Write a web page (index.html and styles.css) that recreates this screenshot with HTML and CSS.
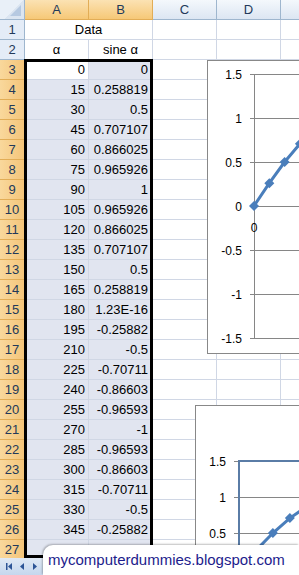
FILE: index.html
```html
<!DOCTYPE html>
<html lang="en">
<head>
    <meta charset="UTF-8">
    <title>Sine table</title>
    <link rel="stylesheet" href="styles.css">
</head>
<body>
<div class="sheet">
    <div class="row head">
        <div class="corner"></div>
        <div class="hd on">A</div>
        <div class="hd on">B</div>
        <div class="hd">C</div>
        <div class="hd">D</div>
        <div class="hd"></div>
    </div>
    <div class="row"><div class="rh">1</div><div class="merge">Data</div><div class="c"></div><div class="c"></div><div class="c"></div></div>
    <div class="row"><div class="rh">2</div><div class="c mid">α</div><div class="c mid">sine α</div><div class="c"></div><div class="c"></div><div class="c"></div></div>
    <div class="row"><div class="rh on">3</div><div class="c num">0</div><div class="c num sel">0</div><div class="c"></div><div class="c"></div><div class="c"></div></div>
    <div class="row"><div class="rh on">4</div><div class="c num sel">15</div><div class="c num sel">0.258819</div><div class="c"></div><div class="c"></div><div class="c"></div></div>
    <div class="row"><div class="rh on">5</div><div class="c num sel">30</div><div class="c num sel">0.5</div><div class="c"></div><div class="c"></div><div class="c"></div></div>
    <div class="row"><div class="rh on">6</div><div class="c num sel">45</div><div class="c num sel">0.707107</div><div class="c"></div><div class="c"></div><div class="c"></div></div>
    <div class="row"><div class="rh on">7</div><div class="c num sel">60</div><div class="c num sel">0.866025</div><div class="c"></div><div class="c"></div><div class="c"></div></div>
    <div class="row"><div class="rh on">8</div><div class="c num sel">75</div><div class="c num sel">0.965926</div><div class="c"></div><div class="c"></div><div class="c"></div></div>
    <div class="row"><div class="rh on">9</div><div class="c num sel">90</div><div class="c num sel">1</div><div class="c"></div><div class="c"></div><div class="c"></div></div>
    <div class="row"><div class="rh on">10</div><div class="c num sel">105</div><div class="c num sel">0.965926</div><div class="c"></div><div class="c"></div><div class="c"></div></div>
    <div class="row"><div class="rh on">11</div><div class="c num sel">120</div><div class="c num sel">0.866025</div><div class="c"></div><div class="c"></div><div class="c"></div></div>
    <div class="row"><div class="rh on">12</div><div class="c num sel">135</div><div class="c num sel">0.707107</div><div class="c"></div><div class="c"></div><div class="c"></div></div>
    <div class="row"><div class="rh on">13</div><div class="c num sel">150</div><div class="c num sel">0.5</div><div class="c"></div><div class="c"></div><div class="c"></div></div>
    <div class="row"><div class="rh on">14</div><div class="c num sel">165</div><div class="c num sel">0.258819</div><div class="c"></div><div class="c"></div><div class="c"></div></div>
    <div class="row"><div class="rh on">15</div><div class="c num sel">180</div><div class="c num sel">1.23E-16</div><div class="c"></div><div class="c"></div><div class="c"></div></div>
    <div class="row"><div class="rh on">16</div><div class="c num sel">195</div><div class="c num sel">-0.25882</div><div class="c"></div><div class="c"></div><div class="c"></div></div>
    <div class="row"><div class="rh on">17</div><div class="c num sel">210</div><div class="c num sel">-0.5</div><div class="c"></div><div class="c"></div><div class="c"></div></div>
    <div class="row"><div class="rh on">18</div><div class="c num sel">225</div><div class="c num sel">-0.70711</div><div class="c"></div><div class="c"></div><div class="c"></div></div>
    <div class="row"><div class="rh on">19</div><div class="c num sel">240</div><div class="c num sel">-0.86603</div><div class="c"></div><div class="c"></div><div class="c"></div></div>
    <div class="row"><div class="rh on">20</div><div class="c num sel">255</div><div class="c num sel">-0.96593</div><div class="c"></div><div class="c"></div><div class="c"></div></div>
    <div class="row"><div class="rh on">21</div><div class="c num sel">270</div><div class="c num sel">-1</div><div class="c"></div><div class="c"></div><div class="c"></div></div>
    <div class="row"><div class="rh on">22</div><div class="c num sel">285</div><div class="c num sel">-0.96593</div><div class="c"></div><div class="c"></div><div class="c"></div></div>
    <div class="row"><div class="rh on">23</div><div class="c num sel">300</div><div class="c num sel">-0.86603</div><div class="c"></div><div class="c"></div><div class="c"></div></div>
    <div class="row"><div class="rh on">24</div><div class="c num sel">315</div><div class="c num sel">-0.70711</div><div class="c"></div><div class="c"></div><div class="c"></div></div>
    <div class="row"><div class="rh on">25</div><div class="c num sel">330</div><div class="c num sel">-0.5</div><div class="c"></div><div class="c"></div><div class="c"></div></div>
    <div class="row"><div class="rh on">26</div><div class="c num sel">345</div><div class="c num sel">-0.25882</div><div class="c"></div><div class="c"></div><div class="c"></div></div>
    <div class="row"><div class="rh on">27</div><div class="c sel"></div><div class="c sel"></div><div class="c"></div><div class="c"></div><div class="c"></div></div>

    <!-- selection frame around A3:B27 -->
    <div class="selection"></div>

    <!-- chart 1 -->
    <div class="chart chart-one">
        <svg width="120" height="292" font-family="Liberation Sans, Arial, sans-serif" font-size="12">
            <g stroke="#868686" stroke-width="1">
                <line x1="46.5" y1="13" x2="46.5" y2="277"/>
                <line x1="42" y1="13.5" x2="120" y2="13.5"/>
                <line x1="42" y1="57.5" x2="120" y2="57.5"/>
                <line x1="42" y1="101.5" x2="120" y2="101.5"/>
                <line x1="42" y1="145.5" x2="120" y2="145.5"/>
                <line x1="42" y1="189.5" x2="120" y2="189.5"/>
                <line x1="42" y1="233.5" x2="120" y2="233.5"/>
                <line x1="42" y1="277.5" x2="120" y2="277.5"/>
            </g>
            <g text-anchor="end" fill="#000">
                <text x="34" y="18">1.5</text>
                <text x="34" y="62">1</text>
                <text x="34" y="106">0.5</text>
                <text x="34" y="150">0</text>
                <text x="34" y="194">-0.5</text>
                <text x="34" y="238">-1</text>
                <text x="34" y="282">-1.5</text>
            </g>
            <text x="46" y="171" text-anchor="middle">0</text>
            <polyline points="46,145 61.3,122.2 76.6,101 91.9,82.8 107.2,68.8 122.5,60" fill="none" stroke="#4a7ebb" stroke-width="3"/>
            <g fill="#4a7ebb">
                <path d="M46 140 l5 5 -5 5 -5 -5z"/>
                <path d="M61.3 117.2 l5 5 -5 5 -5 -5z"/>
                <path d="M76.6 96 l5 5 -5 5 -5 -5z"/>
                <path d="M91.9 77.8 l5 5 -5 5 -5 -5z"/>
            </g>
        </svg>
    </div>

    <!-- chart 2 -->
    <div class="chart chart-two">
        <svg width="120" height="170" font-family="Liberation Sans, Arial, sans-serif" font-size="12">
            <g stroke="#868686" stroke-width="1">
                <line x1="38" y1="91.5" x2="120" y2="91.5"/>
                <line x1="38" y1="127.5" x2="120" y2="127.5"/>
                <line x1="38" y1="55.5" x2="43" y2="55.5"/>
            </g>
            <path d="M43 170 V55 H120" fill="none" stroke="#5a7ca6" stroke-width="2"/>
            <g text-anchor="end" fill="#000">
                <text x="30" y="60">1.5</text>
                <text x="30" y="96">1</text>
                <text x="30" y="132">0.5</text>
            </g>
            <polyline points="43,163 60,144.4 76.9,127 93.9,112.1 110.8,100.6 127.8,93.5" fill="none" stroke="#4a7ebb" stroke-width="3"/>
            <g fill="#4a7ebb">
                <path d="M60 139.4 l5 5 -5 5 -5 -5z"/>
                <path d="M76.9 122 l5 5 -5 5 -5 -5z"/>
                <path d="M93.9 107.1 l5 5 -5 5 -5 -5z"/>
                <path d="M110.8 95.6 l5 5 -5 5 -5 -5z"/>
            </g>
        </svg>
    </div>

    <!-- sheet tab navigation -->
    <div class="tabbar">
        <svg width="44" height="17">
            <g fill="#2d5596">
                <rect x="6" y="5" width="1.5" height="7"/>
                <path d="M8 8.5 L12 5 V12z"/>
                <path d="M20 8.5 L24 5 V12z"/>
                <path d="M37 8.5 L33 5 V12z"/>
            </g>
        </svg>
    </div>

    <div class="credit">mycomputerdummies.blogspot.com</div>
</div>
</body>
</html>
```

FILE: styles.css
```css
body {
    margin: 0;
    font-family: "Liberation Sans", Arial, sans-serif;
    font-size: 13px;
    background-color: #fff;
    overflow: hidden;
}

.sheet {
    position: relative;
    width: 299px;
    height: 575px;
    overflow: hidden;
}

.row {
    display: flex;
    height: 20px;
}

.row > div {
    flex: none;
    box-sizing: border-box;
    height: 20px;
    line-height: 20px;
    border-right: 1px solid #d0d7e5;
    border-bottom: 1px solid #d0d7e5;
}

.corner {
    width: 25px;
    background: linear-gradient(135deg, #e9f0f8 55%, #dbe5f1 55%);
    border-right-color: #9eb6ce !important;
    border-bottom-color: #9eb6ce !important;
    position: relative;
}

.corner::after {
    content: "";
    position: absolute;
    right: 3px;
    bottom: 3px;
    border-left: 11px solid transparent;
    border-bottom: 11px solid #b6c9e1;
}

.hd {
    width: 64px;
    text-align: center;
    color: #22395a;
    background: linear-gradient(#f4f8fc, #dce6f2);
    border-right-color: #9eb6ce !important;
    border-bottom-color: #9eb6ce !important;
}

.hd.on {
    background: linear-gradient(#fbe2b3, #f6c877);
    border-right-color: #e2ad56 !important;
    border-bottom-color: #e2ad56 !important;
}

.rh {
    width: 25px;
    text-align: center;
    color: #22395a;
    background-color: #e4ecf7;
    border-right-color: #9eb6ce !important;
    border-bottom-color: #9eb6ce !important;
}

.rh.on {
    background: linear-gradient(90deg, #f9d89c, #f4c57a);
    border-bottom-color: #e2ad56 !important;
}

.c {
    width: 64px;
    padding: 0 3px;
    white-space: nowrap;
    overflow: hidden;
}

.merge {
    width: 128px;
    text-align: center;
}

.mid {
    text-align: center;
}

.num {
    text-align: right;
}

.sel {
    background-color: #e1e5f0;
}

.row .sel.num:nth-child(3) {
    padding-right: 4px;
}

.selection {
    position: absolute;
    left: 24px;
    top: 59px;
    width: 129px;
    height: 499px;
    box-sizing: border-box;
    border: 3px solid #000;
    pointer-events: none;
}

.chart {
    position: absolute;
    background-color: #fff;
    border: 1px solid #888;
}

.chart svg {
    display: block;
}

.chart-one {
    left: 207px;
    top: 60px;
    width: 120px;
    height: 292px;
}

.chart-two {
    left: 195px;
    top: 405px;
    width: 120px;
    height: 170px;
}

.tabbar {
    position: absolute;
    left: 0;
    bottom: 0;
    width: 60px;
    height: 17px;
    background: linear-gradient(#dfe9f5, #c6d7ed);
}

.tabbar svg {
    display: block;
}

.credit {
    position: absolute;
    left: 43px;
    right: 0;
    bottom: 0;
    height: 30px;
    box-sizing: border-box;
    padding: 5px 0 0 5px;
    background-color: #fff;
    border-top-left-radius: 10px;
    box-shadow: -1px -1px 2px rgba(0, 0, 0, 0.25);
    color: #1c1c8c;
    font-size: 15px;
    line-height: 20px;
    white-space: nowrap;
}
```
